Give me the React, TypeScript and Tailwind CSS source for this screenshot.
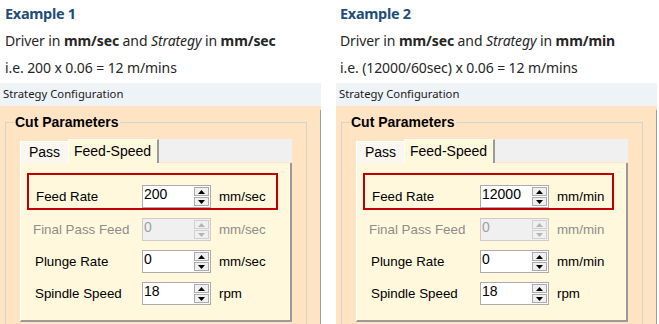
import type { ReactNode } from "react";

type Row = {
  label: string;
  value: string;
  unit: string;
  disabled?: boolean;
  labelPad: string;
};

type Example = {
  title: string;
  unit: string;
  formula: string;
  feed: string;
};

const examples: Example[] = [
  { title: "Example 1", unit: "mm/sec", formula: "i.e. 200 x 0.06 = 12 m/mins", feed: "200" },
  { title: "Example 2", unit: "mm/min", formula: "i.e. (12000/60sec) x 0.06 = 12 m/mins", feed: "12000" },
];

function Spinner({ disabled }: { disabled?: boolean }) {
  const fill = disabled ? "#b4b4b4" : "#000000";
  const edge = disabled ? "border-[#d0d0d0]" : "border-[#acacac]";
  return (
    <div className="flex w-[16px] shrink-0 flex-col gap-px py-px pr-px">
      <div className={`flex h-[10px] items-center justify-center border bg-[#f0f0f0] ${edge}`}>
        <svg width="7" height="4" viewBox="0 0 7 4">
          <path d="M0 4 L3.5 0 L7 4 Z" fill={fill} />
        </svg>
      </div>
      <div className={`flex h-[10px] items-center justify-center border bg-[#f0f0f0] ${edge}`}>
        <svg width="7" height="4" viewBox="0 0 7 4">
          <path d="M0 0 L3.5 4 L7 0 Z" fill={fill} />
        </svg>
      </div>
    </div>
  );
}

function FieldRow({ row, labelW }: { row: Row; labelW: string }) {
  return (
    <div className="flex h-[23px] items-center">
      <div className={`${labelW} ${row.labelPad} shrink-0 ${row.disabled ? "text-[#8d8d8d]" : "text-black"}`}>
        {row.label}
      </div>
      <div
        className={`flex h-[23px] w-[69px] shrink-0 border ${
          row.disabled ? "border-[#cccccc] bg-[#f0f0f0] text-[#a0a0a0]" : "border-[#acacac] bg-white text-black"
        }`}
      >
        <div className="flex-1 pl-[1px] text-[14px] leading-[17px]">{row.value}</div>
        <Spinner disabled={row.disabled} />
      </div>
      <div className={`pl-[8px] ${row.disabled ? "text-[#8d8d8d]" : "text-black"}`}>{row.unit}</div>
    </div>
  );
}

function Bold({ children }: { children: ReactNode }) {
  return <span className="font-bold">{children}</span>;
}

function Panel({ ex, right }: { ex: Example; right?: boolean }) {
  const labelW = right ? "w-[115px]" : "w-[113px]";
  const rows: Row[] = [
    { label: "Final Pass Feed", value: "0", unit: ex.unit, disabled: true, labelPad: "pl-[4px]" },
    { label: "Plunge Rate", value: "0", unit: ex.unit, labelPad: "pl-[6px]" },
    { label: "Spindle Speed", value: "18", unit: "rpm", labelPad: "pl-[6px]" },
  ];

  return (
    <div className="flex h-full w-[321px] shrink-0 flex-col">
      <div
        className={`font-['Noto_Sans',sans-serif] text-[14px] leading-[27px] tracking-[-0.1px] text-[#262626] ${
          right ? "pl-[4px]" : "pl-[5px]"
        }`}
      >
        <div className="text-[14.5px] font-bold tracking-[-0.3px] text-[#1f4e79]">{ex.title}</div>
        <div>
          Driver in <Bold>mm/sec</Bold> and <span className="italic">Strategy</span> in <Bold>{ex.unit}</Bold>
        </div>
        <div>{ex.formula}</div>
      </div>

      <div className="mt-[2px] flex h-[23px] items-center bg-[#eef3f8] pl-[3px] font-['Noto_Sans',sans-serif] text-[11.3px] text-[#1a1a1a]">
        Strategy Configuration
      </div>

      <div className="flex flex-1 bg-[#ffe4c4] font-['Liberation_Sans',Arial,sans-serif]">
        {/* group box */}
        <div className="relative ml-[5px] mt-[16px] w-[303px] border border-b-0 border-[#d6d2cc] pt-[16px]">
          <span className="absolute left-[8px] top-[-9px] bg-[#ffe4c4] px-[1px] text-[14px] font-bold leading-[16px] text-black">
            Cut Parameters
          </span>

          <div className="mx-[14px]">
            <div className="flex h-[24px] items-end text-[14px] text-black">
              <div className="flex h-[22px] w-[48px] items-center border-l border-t border-white bg-[#faf7f0] pl-[8px]">
                Pass
              </div>
              <div className="flex h-[24px] w-[91px] items-center border-l border-t border-r-2 border-white border-r-[#9a9a9a] bg-[#fff8dc] pl-[5px]">
                Feed-Speed
              </div>
              <div className="h-[23px] flex-1 self-start bg-[#f0f0f0]" />
            </div>

            <div className="flex h-[159px] flex-col border-l border-white border-b-2 border-r-2 border-b-[#9a9a9a] border-r-[#9a9a9a] bg-[#fff8dc] pl-[6px] pt-[10px] text-[13.33px]">
              <div className="w-[251px] border-2 border-[#c00000] pt-[10px]">
                <FieldRow
                  row={{ label: "Feed Rate", value: ex.feed, unit: ex.unit, labelPad: "pl-[7px]" }}
                  labelW={labelW}
                />
              </div>
              <div className="mt-[8px] flex flex-col gap-[9px] pl-[2px]">
                {rows.map((r) => (
                  <FieldRow key={r.label} row={r} labelW={labelW} />
                ))}
              </div>
            </div>
          </div>
        </div>
        <div className="mt-[4px] ml-[13px] w-px bg-[#a0a0a0]" />
      </div>
    </div>
  );
}

export default function App() {
  return (
    <div className="flex h-[324px] w-[659px] gap-[15px] overflow-hidden bg-white">
      <Panel ex={examples[0]} />
      <Panel ex={examples[1]} right />
    </div>
  );
}
